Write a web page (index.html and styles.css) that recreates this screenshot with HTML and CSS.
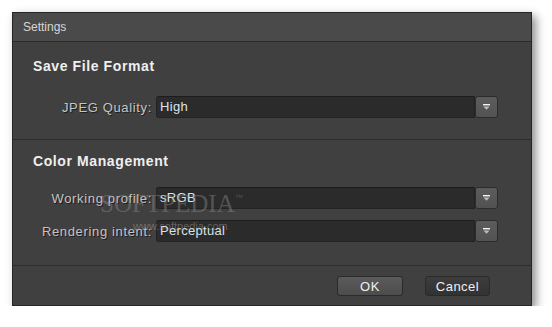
FILE: index.html
```html
<!DOCTYPE html>
<html lang="en">

<head>
    <meta charset="UTF-8">
    <title>Settings</title>
    <link rel="stylesheet" href="styles.css">
</head>

<body>
    <div class="window">
        <div class="titlebar">Settings</div>

        <div class="section first">
            <h2>Save File Format</h2>
            <div class="row">
                <label>JPEG Quality:</label>
                <div class="select">
                    <span class="value">High</span>
                    <span class="arrow">
                        <svg width="9" height="8" viewBox="0 0 9 8"><rect x="1" y="1" width="7" height="1.4" fill="#f4f4f4"/><path d="M1.5 3.6 H7.5 L4.5 6.8 Z" fill="#bdbdbd"/></svg>
                    </span>
                </div>
            </div>
        </div>

        <div class="section second">
            <h2>Color Management</h2>
            <div class="row">
                <label>Working profile:</label>
                <div class="select">
                    <span class="value">sRGB</span>
                    <span class="arrow">
                        <svg width="9" height="8" viewBox="0 0 9 8"><rect x="1" y="1" width="7" height="1.4" fill="#f4f4f4"/><path d="M1.5 3.6 H7.5 L4.5 6.8 Z" fill="#bdbdbd"/></svg>
                    </span>
                </div>
            </div>
            <div class="row">
                <label>Rendering intent:</label>
                <div class="select">
                    <span class="value">Perceptual</span>
                    <span class="arrow">
                        <svg width="9" height="8" viewBox="0 0 9 8"><rect x="1" y="1" width="7" height="1.4" fill="#f4f4f4"/><path d="M1.5 3.6 H7.5 L4.5 6.8 Z" fill="#bdbdbd"/></svg>
                    </span>
                </div>
            </div>
            <div class="watermark">
                <span class="mark">SOFTPEDIA<sup>™</sup></span>
                <span class="url">www.softpedia.com</span>
            </div>
        </div>

        <div class="footer">
            <button class="btn ok">OK</button>
            <button class="btn cancel">Cancel</button>
        </div>
    </div>
</body>

</html>
```

FILE: styles.css
```css
body {
    margin: 0;
    background-color: #ffffff;
    font-family: "Liberation Sans", Arial, sans-serif;
}

.window {
    margin: 12px 0 0 12px;
    width: 518px;
    border: 1px solid #262626;
    background-color: #404040;
    box-shadow: 4px 4px 9px rgba(0, 0, 0, 0.45);
}

.titlebar {
    height: 28px;
    line-height: 28px;
    padding-left: 10px;
    background-color: #4a4a4a;
    border-bottom: 1px solid #2a2a2a;
    color: #d6d6d6;
    font-size: 12px;
}

.section {
    position: relative;
    padding-left: 20px;
    padding-right: 32px;
}

.section.first {
    padding-top: 16px;
    padding-bottom: 21px;
    border-bottom: 1px solid #2d2d2d;
}

.section.second {
    padding-top: 13px;
    padding-bottom: 23px;
    border-bottom: 1px solid #2d2d2d;
}

h2 {
    margin: 0 0 22px 0;
    height: 16px;
    line-height: 16px;
    font-size: 14px;
    font-weight: bold;
    letter-spacing: 0.6px;
    color: #efefef;
}

.second h2 {
    margin-bottom: 18px;
}

.row {
    display: grid;
    grid-template-columns: 119px 342px;
    gap: 4px;
    align-items: center;
    margin-left: -20px;
    padding-left: 20px;
}

.row + .row {
    margin-top: 11px;
}

label {
    text-align: right;
    font-size: 13px;
    letter-spacing: 0.65px;
    color: #c4c4c4;
    text-shadow: 1px 1px 0 #1e1e1e;
    white-space: nowrap;
}

.select {
    display: flex;
    height: 22px;
}

.select .value {
    flex: 1;
    box-sizing: border-box;
    height: 22px;
    line-height: 20px;
    padding-left: 3px;
    background-color: #2b2b2b;
    border: 1px solid #232323;
    border-top-color: #1c1c1c;
    border-radius: 3px 0 0 3px;
    color: #d9e3ea;
    font-size: 13px;
    letter-spacing: 0.3px;
}

.select .arrow {
    box-sizing: border-box;
    width: 23px;
    height: 22px;
    display: flex;
    align-items: center;
    justify-content: center;
    background: linear-gradient(#5c5c5c, #525252);
    border: 1px solid #2c2c2c;
    border-radius: 3px;
}

.footer {
    display: flex;
    justify-content: flex-end;
    gap: 22px;
    padding: 10px 41px 9px 0;
}

.btn {
    box-sizing: border-box;
    height: 20px;
    border: 1px solid #2a2a2a;
    border-radius: 3px;
    color: #f0f0f0;
    font-family: "Liberation Sans", Arial, sans-serif;
    font-size: 13px;
    letter-spacing: 0.5px;
    padding: 0;
}

.btn.ok {
    width: 66px;
    background: linear-gradient(#5b5b5b, #4c4c4c);
}

.btn.cancel {
    width: 65px;
    background: linear-gradient(#3c3c3c, #323232);
}

.watermark {
    position: absolute;
    left: 87px;
    top: 44px;
    pointer-events: none;
}

.watermark .mark {
    display: block;
    line-height: 28px;
    font-family: "Liberation Serif", serif;
    font-size: 25px;
    color: rgba(150, 150, 150, 0.4);
}

.watermark .mark sup {
    font-size: 8px;
    font-family: "Liberation Sans", sans-serif;
    vertical-align: 12px;
}

.watermark .url {
    display: block;
    margin: 2px 0 0 33px;
    font-size: 11px;
    color: rgba(170, 170, 170, 0.45);
}
```
